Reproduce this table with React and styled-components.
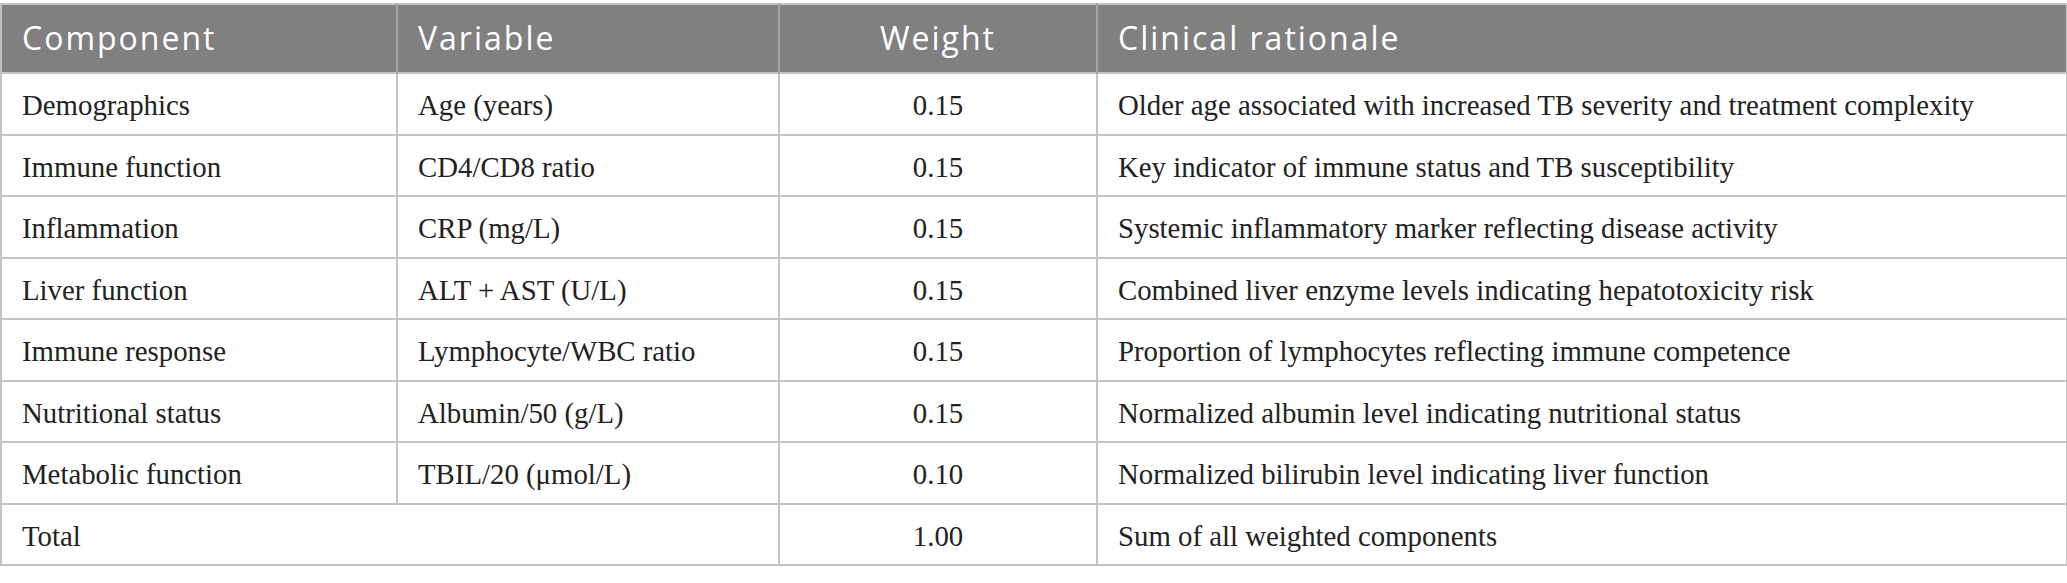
import React from 'react';
import styled, { createGlobalStyle } from 'styled-components';

const GlobalStyle = createGlobalStyle`
  html, body {
    margin: 0;
    padding: 0;
    background: #ffffff;
  }
`;

const Page = styled.div`
  padding: 3px 1px 0 0;
  background: #ffffff;
`;

const Table = styled.table`
  width: 2066px;
  border-collapse: collapse;
  table-layout: fixed;
  border: 2px solid #c4c4c4;
`;

const HeadRow = styled.tr`
  height: 69px;
  background: #7f807f;
`;

const HeadCell = styled.th`
  padding: 0 20px 2px;
  text-align: ${(p) => (p.center ? 'center' : 'left')};
  font-family: 'Open Sans', 'Noto Sans', sans-serif;
  font-weight: 400;
  font-size: 32px;
  letter-spacing: 2px;
  color: #ffffff;
  border-left: 2px solid #a3a3a3;
  vertical-align: middle;
  white-space: nowrap;

  &:first-child {
    border-left: none;
  }
`;

const Row = styled.tr`
  height: 61.5px;
`;

const Cell = styled.td`
  padding: 4px 20px 0;
  text-align: ${(p) => (p.center ? 'center' : 'left')};
  font-family: 'Liberation Serif', 'Times New Roman', serif;
  font-size: 28.8px;
  color: #222222;
  border: 2px solid #c4c4c4;
  vertical-align: middle;
  white-space: nowrap;
`;

const rows = [
  ['Demographics', 'Age (years)', '0.15', 'Older age associated with increased TB severity and treatment complexity'],
  ['Immune function', 'CD4/CD8 ratio', '0.15', 'Key indicator of immune status and TB susceptibility'],
  ['Inflammation', 'CRP (mg/L)', '0.15', 'Systemic inflammatory marker reflecting disease activity'],
  ['Liver function', 'ALT + AST (U/L)', '0.15', 'Combined liver enzyme levels indicating hepatotoxicity risk'],
  ['Immune response', 'Lymphocyte/WBC ratio', '0.15', 'Proportion of lymphocytes reflecting immune competence'],
  ['Nutritional status', 'Albumin/50 (g/L)', '0.15', 'Normalized albumin level indicating nutritional status'],
  ['Metabolic function', 'TBIL/20 (\u03bcmol/L)', '0.10', 'Normalized bilirubin level indicating liver function'],
];

const App = () => {
  return (
    <Page>
      <GlobalStyle />
      <Table>
        <colgroup>
          <col style={{ width: 396 }} />
          <col style={{ width: 382 }} />
          <col style={{ width: 318 }} />
          <col style={{ width: 970 }} />
        </colgroup>
        <thead>
          <HeadRow>
            <HeadCell>Component</HeadCell>
            <HeadCell>Variable</HeadCell>
            <HeadCell center>Weight</HeadCell>
            <HeadCell>Clinical rationale</HeadCell>
          </HeadRow>
        </thead>
        <tbody>
          {rows.map((r) => (
            <Row key={r[0]}>
              <Cell>{r[0]}</Cell>
              <Cell>{r[1]}</Cell>
              <Cell center>{r[2]}</Cell>
              <Cell>{r[3]}</Cell>
            </Row>
          ))}
          <Row>
            <Cell colSpan={2}>Total</Cell>
            <Cell center>1.00</Cell>
            <Cell>Sum of all weighted components</Cell>
          </Row>
        </tbody>
      </Table>
    </Page>
  );
};

export default App;
